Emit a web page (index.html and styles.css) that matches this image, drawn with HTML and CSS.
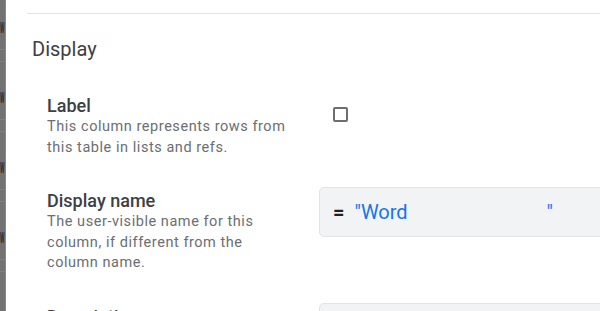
FILE: index.html
```html
<!DOCTYPE html>
<html>
<head>
<meta charset="utf-8">
<link rel="stylesheet" href="styles.css">
</head>
<body>
<div class="app">
  <div class="backdrop">
    <div class="bd-block"><div class="bd-top"><span class="bd-w">W</span></div><div class="bd-mid"></div></div>
    <div class="bd-block"><div class="bd-top"><span class="bd-w">W</span></div><div class="bd-mid"></div></div>
    <div class="bd-block"><div class="bd-top"><span class="bd-w">W</span></div><div class="bd-mid"></div></div>
    <div class="bd-block"><div class="bd-top"><span class="bd-w">W</span></div><div class="bd-mid"></div></div>
  </div>
  <div class="panel">
    <section class="section">
      <h2 class="section-title">Display</h2>

      <div class="field">
        <div class="field-info">
          <div class="field-name">Label</div>
          <div class="field-desc">This column represents rows from this table in lists and refs.</div>
        </div>
        <div class="field-control">
          <span class="checkbox"></span>
        </div>
      </div>

      <div class="field">
        <div class="field-info">
          <div class="field-name">Display name</div>
          <div class="field-desc">The user-visible name for this column, if different from the column name.</div>
        </div>
        <div class="field-control">
          <div class="expr-input">
            <span class="expr-eq">=</span><span class="expr-str">"Word                            "</span>
          </div>
        </div>
      </div>

      <div class="field">
        <div class="field-info">
          <div class="field-name">Description</div>
        </div>
        <div class="field-control">
          <div class="expr-input"></div>
        </div>
      </div>
    </section>
  </div>
</div>
</body>
</html>
```

FILE: styles.css
```css
html, body {
  margin: 0;
  padding: 0;
  width: 600px;
  height: 311px;
  overflow: hidden;
  background: #ffffff;
  font-family: Roboto, "Noto Sans", Arial, sans-serif;
}

.app {
  display: flex;
  width: 600px;
  height: 311px;
  overflow: hidden;
}

.backdrop {
  width: 6px;
  flex-shrink: 0;
  background: #727272;
  overflow: hidden;
  border-right: 1px solid #8a8a8a;
  box-sizing: border-box;
}

.bd-block {
  height: 70px;
}

.bd-top {
  height: 50px;
  box-sizing: border-box;
  padding-top: 18px;
  border-bottom: 1px solid #808080;
}

.bd-w {
  display: inline-block;
  font-size: 14px;
  line-height: 18px;
  font-weight: 700;
  color: #2a2a2a;
  transform: scaleX(0.36);
  transform-origin: 0 50%;
}

.bd-mid {
  height: 12px;
  box-sizing: border-box;
  border-bottom: 1px solid #808080;
}

.panel {
  flex: 1;
  min-width: 0;
  padding: 13px 0 0 21px;
  overflow: hidden;
}

.section {
  border-top: 1px solid #e3e3e3;
  padding-top: 21px;
}

.section-title {
  margin: 0 0 0 5px;
  font-size: 20px;
  line-height: 28px;
  font-weight: 400;
  color: #3c4043;
}

.field {
  display: flex;
  margin-top: 32px;
  padding-left: 20px;
}

.field-info {
  width: 272px;
  flex-shrink: 0;
}

.field-name {
  font-size: 18px;
  line-height: 22px;
  font-weight: 500;
  color: #3c4043;
}

.field-desc {
  font-size: 14.5px;
  line-height: 20.5px;
  letter-spacing: 0.55px;
  color: #6b6e72;
  width: 246px;
}

.field-control {
  flex: 1;
  min-width: 0;
}

.checkbox {
  display: block;
  width: 15px;
  height: 15px;
  box-sizing: border-box;
  border: 2px solid #6e6e6e;
  border-radius: 2px;
  margin: 12px 0 0 14px;
}

.expr-input {
  display: flex;
  align-items: center;
  margin-top: -3px;
  width: 320px;
  height: 50px;
  box-sizing: border-box;
  padding-left: 13px;
  background: #f1f3f4;
  border: 1px solid #e1e3e6;
  border-radius: 5px;
}

.expr-eq {
  font-size: 20px;
  font-weight: 700;
  color: #202124;
  margin-right: 10px;
}

.expr-str {
  white-space: pre;
  font-size: 20px;
  color: #1a73e8;
}
```
